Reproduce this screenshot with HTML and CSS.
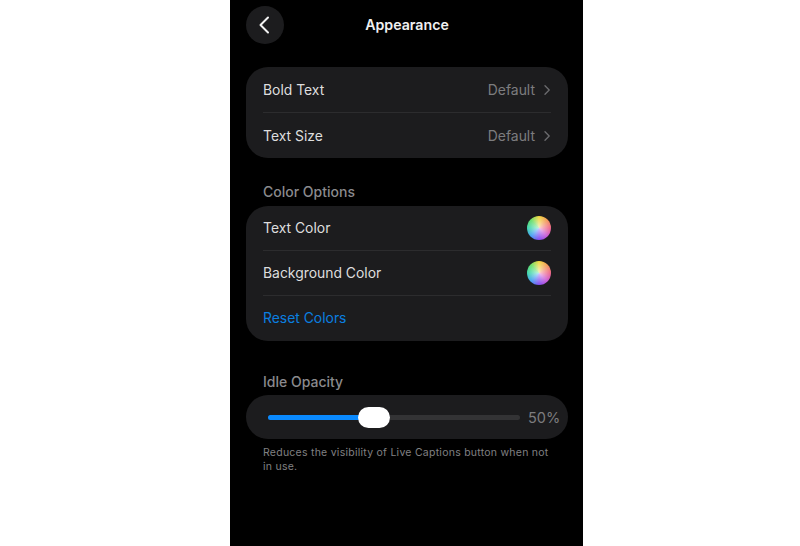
FILE: index.html
```html
<!DOCTYPE html>
<html lang="en">
<head>
  <meta charset="UTF-8">
  <meta name="viewport" content="width=device-width, initial-scale=1.0">
  <title>Appearance</title>
  <link rel="stylesheet" href="styles.css">
</head>
<body>
  <div class="phone">
    <div class="header">
      <button class="back" aria-label="Back">
        <svg width="12" height="18" viewBox="0 0 12 18"><path d="M10 1.500 2.500 9l7.500 7.500" fill="none" stroke="#f2f2f2" stroke-width="2" stroke-linecap="round" stroke-linejoin="round"/></svg>
      </button>
      <div class="title">Appearance</div>
    </div>

    <div class="card first-card">
      <div class="row nav-row">
        <span>Bold Text</span>
        <span class="value">Default <svg width="6" height="10" viewBox="0 0 6 10"><path d="M1 .8 5.200 5 1 9.200" fill="none" stroke="#6c6c6f" stroke-width="1.300" stroke-linecap="round" stroke-linejoin="round"/></svg></span>
      </div>
      <div class="divider"></div>
      <div class="row nav-row">
        <span>Text Size</span>
        <span class="value">Default <svg width="6" height="10" viewBox="0 0 6 10"><path d="M1 .8 5.200 5 1 9.200" fill="none" stroke="#6c6c6f" stroke-width="1.300" stroke-linecap="round" stroke-linejoin="round"/></svg></span>
      </div>
    </div>

    <div class="section-label color-label">Color Options</div>
    <div class="card">
      <div class="row text-color-row">
        <span>Text Color</span>
        <span class="wheel"></span>
      </div>
      <div class="divider"></div>
      <div class="row bg-color-row">
        <span>Background Color</span>
        <span class="wheel"></span>
      </div>
      <div class="divider"></div>
      <div class="row reset-row">Reset Colors</div>
    </div>

    <div class="section-label idle-label">Idle Opacity</div>
    <div class="card slider-card">
      <div class="slider">
        <div class="slider-fill"></div>
        <div class="slider-thumb"></div>
      </div>
      <span class="percent">50%</span>
    </div>
    <p class="note">Reduces the visibility of Live Captions button when not in use.</p>
  </div>
</body>
</html>
```

FILE: styles.css
```css
body {
  margin: 0;
  height: 546px;
  background: #fff;
  font-family: 'Inter', 'Liberation Sans', sans-serif;
  overflow: hidden;
}
.phone {
  width: 353px;
  height: 546px;
  margin-left: 230px;
  padding: 0 15px 0 16px;
  box-sizing: border-box;
  background: #000;
  color: #dedede;
}
.header {
  display: flex;
  align-items: center;
  height: 49px;
  position: relative;
}
.back {
  width: 38px;
  height: 38px;
  border: none;
  border-radius: 50%;
  padding: 0 3px 0 0;
  background: #1c1c1e;
  display: flex;
  align-items: center;
  justify-content: center;
}
.title {
  position: absolute;
  left: 0;
  right: 0;
  text-align: center;
  color: #f0f0f0;
  font-size: 14.200px;
  font-weight: 600;
}
.card {
  background: #1c1c1e;
  border-radius: 22px;
  padding: 0 17px;
}
.first-card {
  margin-top: 18px;
}
.row {
  display: flex;
  align-items: center;
  justify-content: space-between;
  font-size: 13.900px;
}
.nav-row {
  height: 45px;
}
.text-color-row {
  height: 43.500px;
}
.bg-color-row {
  height: 44.500px;
}
.reset-row {
  height: 44px;
  padding-bottom: 1px;
  color: #0a7fe0;
}
.value {
  display: flex;
  align-items: center;
  gap: 9px;
  margin-right: 1px;
  color: #7c7c7f;
  font-size: 13.900px;
}
.divider {
  height: 1px;
  background: #2c2c2e;
}
.wheel {
  width: 24px;
  height: 24px;
  border-radius: 50%;
  background:
    radial-gradient(circle, rgba(255, 255, 255, 0.72) 0, rgba(255, 255, 255, 0) 85%),
    conic-gradient(#f0d020, #f08a3c, #ec5078, #c040d0, #7030f0, #2890f0, #20d0a0, #50d850, #f0d020);
}
.section-label {
  padding-left: 17px;
  color: #8a8a8d;
  font-size: 14px;
  font-weight: 500;
  line-height: 17px;
}
.color-label {
  margin-top: 25px;
  margin-bottom: 6px;
}
.idle-label {
  margin-top: 32px;
  margin-bottom: 5px;
}
.slider-card {
  height: 44px;
  display: flex;
  align-items: center;
  padding: 0 8px 0 22px;
}
.slider {
  position: relative;
  width: 252px;
  height: 5px;
  flex-shrink: 0;
  border-radius: 3px;
  background: #333335;
}
.slider-fill {
  width: 100px;
  height: 100%;
  border-radius: 3px;
  background: #0a8aff;
}
.slider-thumb {
  position: absolute;
  left: 90px;
  top: -8px;
  width: 32px;
  height: 21px;
  border-radius: 11px;
  background: #fff;
}
.percent {
  margin-left: 8px;
  color: #7c7c7f;
  font-size: 14.500px;
}
.note {
  margin: 7px 0 0;
  padding: 0 17px;
  color: #808083;
  font-size: 10.500px;
  line-height: 13.500px;
  letter-spacing: 0.25px;
}
```
